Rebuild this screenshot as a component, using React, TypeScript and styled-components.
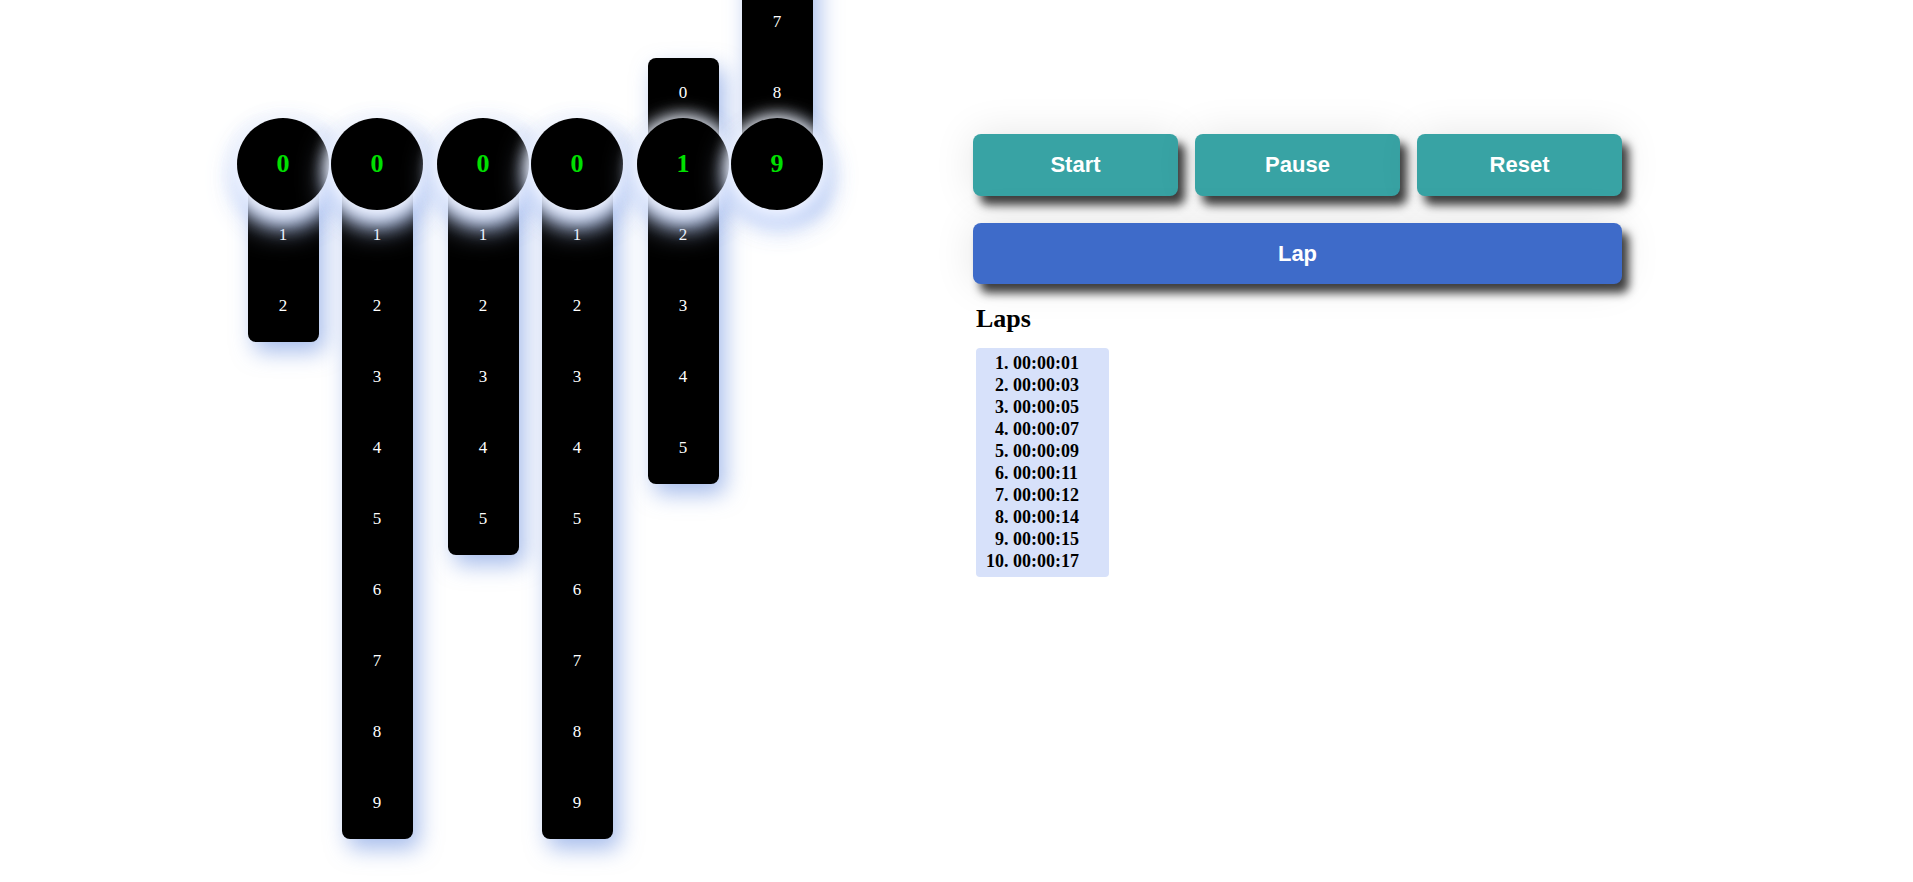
import React from 'react';
import styled, { createGlobalStyle } from 'styled-components';

const CELL = 71;

const GlobalStyle = createGlobalStyle`
  html, body {
    margin: 0;
    padding: 0;
    background: #ffffff;
    overflow: hidden;
  }
  body {
    font-family: "Liberation Serif", "Times New Roman", serif;
  }
`;

const Page = styled.div`
  display: flex;
  align-items: flex-start;
  gap: 150px;
  padding: 118px 0 0 237px;
  height: 882px;
  box-sizing: border-box;
`;

const Clock = styled.div`
  display: flex;
  gap: 14px;
`;

const Pair = styled.div`
  display: flex;
  gap: 2px;
`;

const Digit = styled.div`
  position: relative;
  width: 92px;
  height: 92px;
`;

const Reel = styled.div<{ $value: number; $count: number }>`
  position: absolute;
  left: 10.5px;
  top: 10.5px;
  width: ${CELL}px;
  height: ${(p) => p.$count * CELL}px;
  background: #000;
  border-radius: 8px;
  transform: translateY(${(p) => -p.$value * CELL}px);
  box-shadow: 6px 10px 22px rgba(95, 135, 220, 0.55);
  display: flex;
  flex-direction: column;
`;

const Cell = styled.div`
  height: ${CELL}px;
  flex: none;
  display: flex;
  align-items: center;
  justify-content: center;
  color: #ffffff;
  font-family: "Liberation Serif", "Times New Roman", serif;
  font-size: 17px;
`;

const Face = styled.div`
  position: relative;
  width: 92px;
  height: 92px;
  border-radius: 50%;
  background: #000;
  display: flex;
  align-items: center;
  justify-content: center;
  color: #00e000;
  font-family: "Liberation Serif", "Times New Roman", serif;
  font-weight: bold;
  font-size: 26px;
  box-shadow: 0 0 18px 2px rgba(255, 255, 255, 0.8),
    0 8px 20px 2px rgba(220, 230, 255, 1),
    0 14px 30px 2px rgba(200, 215, 250, 0.9),
    6px 12px 26px rgba(110, 150, 230, 0.5);
`;

const Panel = styled.div`
  display: flex;
  flex-direction: column;
  width: 649px;
  margin-top: 16px;
`;

const ButtonRow = styled.div`
  display: grid;
  grid-template-columns: repeat(3, 1fr);
  gap: 17px;
`;

const Button = styled.button<{ $tone: 'teal' | 'blue' }>`
  height: 62px;
  border: none;
  border-radius: 8px;
  background: ${(p) => (p.$tone === 'teal' ? '#38a3a4' : '#3e6bc9')};
  color: #ffffff;
  font-family: "Liberation Sans", Arial, sans-serif;
  font-weight: bold;
  font-size: 22px;
  padding: 0;
  cursor: pointer;
  box-shadow: 7px 9px 10px rgba(0, 0, 0, 0.75), 0 0 40px rgba(0, 0, 0, 0.1);
`;

const LapButton = styled(Button)`
  width: 100%;
  height: 61px;
  margin-top: 27px;
`;

const Heading = styled.h2`
  margin: 20px 0 0 3px;
  font-family: "Liberation Serif", "Times New Roman", serif;
  font-weight: bold;
  font-size: 26px;
  line-height: normal;
  color: #000;
`;

const LapList = styled.ol`
  margin: 14px 0 0 3px;
  padding: 4px 0 5px 37px;
  width: 133px;
  box-sizing: border-box;
  background: #d7e1fa;
  border-radius: 4px;
  font-family: "Liberation Serif", "Times New Roman", serif;
  font-weight: bold;
  font-size: 18px;
  line-height: 22px;
  color: #000;
`;

const LapItem = styled.li``;

const groups: { count: number; value: number }[][] = [
  [
    { count: 3, value: 0 },
    { count: 10, value: 0 },
  ],
  [
    { count: 6, value: 0 },
    { count: 10, value: 0 },
  ],
  [
    { count: 6, value: 1 },
    { count: 10, value: 9 },
  ],
];

const laps = [
  '00:00:01',
  '00:00:03',
  '00:00:05',
  '00:00:07',
  '00:00:09',
  '00:00:11',
  '00:00:12',
  '00:00:14',
  '00:00:15',
  '00:00:17',
];

export default function App() {
  return (
    <>
      <GlobalStyle />
      <Page>
        <Clock>
          {groups.map((pair, gi) => (
            <Pair key={gi}>
              {pair.map((d, di) => (
                <Digit key={di}>
                  <Reel $value={d.value} $count={d.count}>
                    {Array.from({ length: d.count }, (_, i) => (
                      <Cell key={i}>{i}</Cell>
                    ))}
                  </Reel>
                  <Face>{d.value}</Face>
                </Digit>
              ))}
            </Pair>
          ))}
        </Clock>
        <Panel>
          <ButtonRow>
            <Button $tone="teal">Start</Button>
            <Button $tone="teal">Pause</Button>
            <Button $tone="teal">Reset</Button>
          </ButtonRow>
          <LapButton $tone="blue">Lap</LapButton>
          <Heading>Laps</Heading>
          <LapList>
            {laps.map((l, i) => (
              <LapItem key={i}>{l}</LapItem>
            ))}
          </LapList>
        </Panel>
      </Page>
    </>
  );
}
